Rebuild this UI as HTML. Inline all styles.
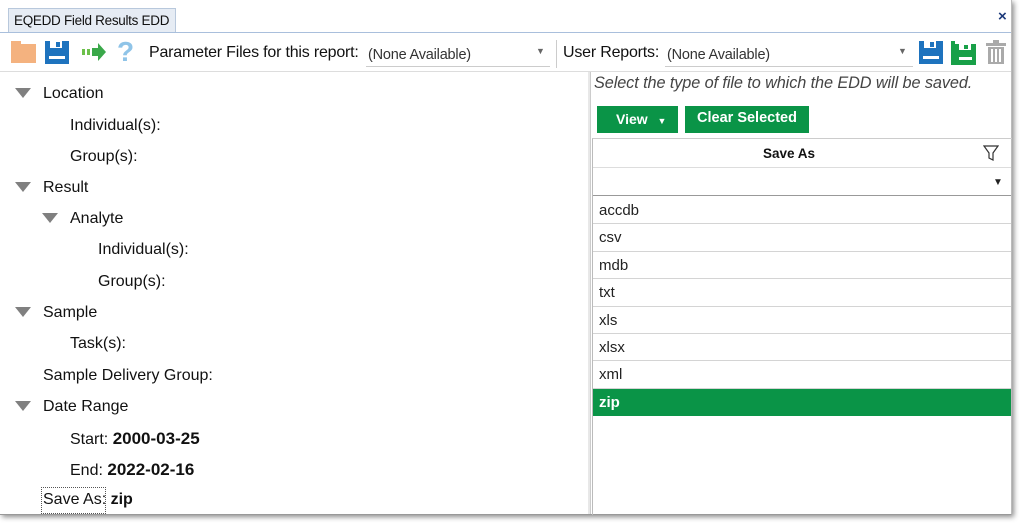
<!DOCTYPE html>
<html><head><style>
*{margin:0;padding:0;box-sizing:border-box}
body{width:1020px;height:523px;background:#fff;font-family:"Liberation Sans",sans-serif;font-size:14px;color:#111;position:relative;overflow:hidden}
.frame{position:absolute;left:0;top:0;width:1012px;height:515px;background:#fff;box-shadow:2px 2px 5px rgba(0,0,0,.45);border-right:1px solid #bbb;border-bottom:1px solid #999}
.a{position:absolute;white-space:nowrap}
.t{font-size:16px}
.tri{position:absolute;width:0;height:0;border-left:8px solid transparent;border-right:8px solid transparent;border-top:10px solid #808080}
.gr{position:absolute;left:593px;width:418px;height:27.4px;border-bottom:1px solid #d4d4d4;padding-left:6px;line-height:28px;font-size:15px;color:#222}
</style></head><body>
<div class="frame"></div>
<div class="a" style="left:8px;top:8px;width:168px;height:25px;background:#e6ecf4;border:1px solid #b8c8dc;border-bottom:none;font-size:13.5px;line-height:23px;padding-left:5px;letter-spacing:-.3px">EQEDD Field Results EDD</div>
<div class="a" style="left:0;top:32px;width:1011px;height:1px;background:#a9bfdc"></div>
<div class="a" style="left:998px;top:8px;font-weight:bold;color:#1d3a7a;font-size:15px">×</div>
<div class="a" style="left:11px;top:44px;width:25px;height:19px;background:#f4b27f"></div>
<div class="a" style="left:11px;top:41px;width:10px;height:4px;background:#f4b27f"></div>
<svg class="a" style="left:44px;top:40px" width="26" height="25"><path d="M1 1h24v23H1z" fill="#1e73be"/><rect x="6" y="1" width="12" height="7" fill="#fff"/><rect x="12" y="2" width="4" height="5" fill="#1e73be"/><rect x="5" y="16" width="16" height="3" fill="#fff"/></svg>
<svg class="a" style="left:81px;top:42px" width="26" height="20"><rect x="1" y="7" width="3" height="6" fill="#6cc04a"/><rect x="6" y="7" width="3" height="6" fill="#6cc04a"/><path d="M11 6h6V1l8 9-8 9v-5h-6z" fill="#3aa84a"/></svg>
<div class="a" style="left:117px;top:36px;font-size:28px;font-weight:bold;color:#8fc4e8">?</div>
<div class="a" style="left:149px;top:44px;font-size:16px;letter-spacing:-.2px">Parameter Files for this report:</div>
<div class="a" style="left:368px;top:47px;font-size:14.5px;color:#333;letter-spacing:-.2px">(None Available)</div>
<div class="a" style="left:366px;top:66px;width:184px;height:1px;background:#ccc"></div>
<div class="a" style="left:536px;top:46px;font-size:9px;color:#666">▼</div>
<div class="a" style="left:556px;top:40px;width:1px;height:28px;background:#ccc"></div>
<div class="a" style="left:563px;top:44px;font-size:16px;letter-spacing:-.2px">User Reports:</div>
<div class="a" style="left:667px;top:47px;font-size:14.5px;color:#333;letter-spacing:-.2px">(None Available)</div>
<div class="a" style="left:665px;top:66px;width:248px;height:1px;background:#ccc"></div>
<div class="a" style="left:898px;top:46px;font-size:9px;color:#666">▼</div>
<svg class="a" style="left:918px;top:40px" width="26" height="25"><path d="M1 1h24v23H1z" fill="#1e73be"/><rect x="6" y="1" width="12" height="7" fill="#fff"/><rect x="12" y="2" width="4" height="5" fill="#1e73be"/><rect x="5" y="16" width="16" height="3" fill="#fff"/></svg>
<svg class="a" style="left:950px;top:40px" width="27" height="26"><path d="M1 1h4v24H1z" fill="#18a048"/><path d="M4 4h22v21H4z" fill="#18a048"/><rect x="9" y="4" width="12" height="6" fill="#fff"/><rect x="14" y="5" width="4" height="4" fill="#18a048"/><rect x="9" y="17" width="13" height="3" fill="#fff"/></svg>
<svg class="a" style="left:985px;top:40px" width="22" height="25"><rect x="1" y="3" width="20" height="3" fill="#aaa"/><rect x="8" y="0" width="6" height="3" fill="#aaa"/><path d="M3 7h16v17H3z" fill="#aaa"/><rect x="6" y="9" width="2" height="13" fill="#fff"/><rect x="10" y="9" width="2" height="13" fill="#fff"/><rect x="14" y="9" width="2" height="13" fill="#fff"/></svg>
<div class="a" style="left:0;top:71px;width:1011px;height:1px;background:#ddd"></div>
<div class="tri" style="left:15px;top:88px"></div><div class="a t" style="left:43px;top:85px">Location</div>
<div class="a t" style="left:70px;top:117px">Individual(s):</div>
<div class="a t" style="left:70px;top:148px">Group(s):</div>
<div class="tri" style="left:15px;top:182px"></div><div class="a t" style="left:43px;top:179px">Result</div>
<div class="tri" style="left:42px;top:213px"></div><div class="a t" style="left:70px;top:210px">Analyte</div>
<div class="a t" style="left:98px;top:241px">Individual(s):</div>
<div class="a t" style="left:98px;top:273px">Group(s):</div>
<div class="tri" style="left:15px;top:307px"></div><div class="a t" style="left:43px;top:304px">Sample</div>
<div class="a t" style="left:70px;top:335px">Task(s):</div>
<div class="a t" style="left:43px;top:367px">Sample Delivery Group:</div>
<div class="tri" style="left:15px;top:401px"></div><div class="a t" style="left:43px;top:398px">Date Range</div>
<div class="a t" style="left:70px;top:429px">Start: <b style="font-size:17px">2000-03-25</b></div>
<div class="a t" style="left:70px;top:460px">End: <b style="font-size:17px">2022-02-16</b></div>
<div class="a" style="left:41px;top:487px;width:65px;height:27px;border:1px dotted #555"></div>
<div class="a t" style="left:43px;top:491px">Save As: <b>zip</b></div>
<div class="a" style="left:588px;top:72px;width:3px;height:442px;background:#e8e8e8;border-right:1px solid #ccc"></div>
<div class="a" style="left:594px;top:74px;font-size:16.3px;font-style:italic;color:#444;letter-spacing:-.1px">Select the type of file to which the EDD will be saved.</div>
<div class="a" style="left:597px;top:106px;width:81px;height:27px;background:#0a9447;color:#fff;font-weight:bold;font-size:14px;line-height:27px;padding-left:19px">View <span style="font-size:9px;margin-left:6px">▼</span></div>
<div class="a" style="left:685px;top:106px;width:124px;height:27px;background:#0a9447;color:#fff;font-weight:bold;font-size:14.5px;line-height:25px;text-align:center">Clear Selected</div>
<div class="a" style="left:592px;top:138px;width:420px;height:377px;border-left:1px solid #bbb;border-top:1px solid #ccc"></div>
<div class="a" style="left:593px;top:139px;width:392px;height:29px;text-align:center;line-height:30px;font-weight:bold;font-size:13.5px">Save As</div>
<div class="a" style="left:593px;top:167px;width:418px;height:1px;background:#ddd"></div>
<svg class="a" style="left:983px;top:145px" width="16" height="17"><path d="M1 1h14l-5 7v7l-4-2V8z" fill="none" stroke="#333" stroke-width="1.2"/></svg>
<div class="a" style="left:593px;top:168px;width:418px;height:28px;border-bottom:1px solid #999"></div>
<div class="a" style="left:993px;top:177px;font-size:10px;color:#222">▼</div>
<div class="gr" style="top:197px">accdb</div>
<div class="gr" style="top:224.4px">csv</div>
<div class="gr" style="top:251.8px">mdb</div>
<div class="gr" style="top:279.2px">txt</div>
<div class="gr" style="top:306.6px">xls</div>
<div class="gr" style="top:334px">xlsx</div>
<div class="gr" style="top:361.4px">xml</div>
<div class="gr" style="top:389px;background:#0a9447;color:#fff;font-weight:bold;border-bottom:none">zip</div>
</body></html>
